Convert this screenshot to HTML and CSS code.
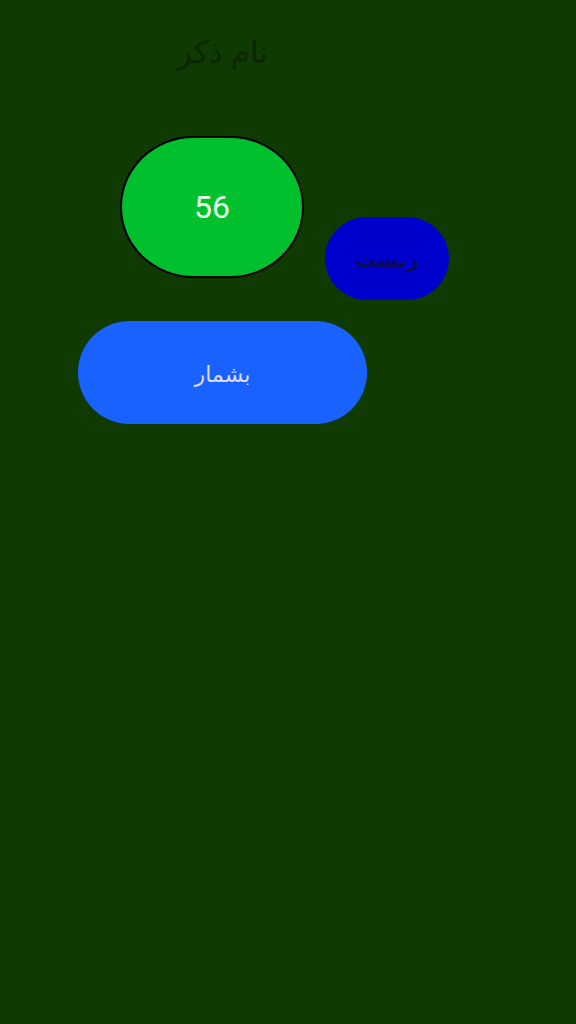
FILE: index.html
```html
<!DOCTYPE html>
<html lang="fa">
<head>
<meta charset="utf-8">
<link rel="stylesheet" href="styles.css">
</head>
<body>
<div class="page">
  <div class="title">نام ذکر</div>
  <div class="row">
    <div class="counter">56</div>
    <div class="reset">ریست</div>
  </div>
  <div class="count-btn">بشمار</div>
</div>
</body>
</html>
```
FILE: styles.css
```css
html, body {
  margin: 0;
  padding: 0;
  background: #0f3a02;
  height: 100%;
}
.page {
  width: 576px;
  height: 1024px;
  padding: 30px 0 0 78px;
  box-sizing: border-box;
  font-family: "Noto Sans", "DejaVu Sans", sans-serif;
}
.title {
  width: 289px;
  text-align: center;
  font-size: 31px;
  line-height: 42px;
  color: #0a2602;
  direction: rtl;
}
.row {
  display: flex;
  align-items: flex-start;
  margin-top: 64px;
  margin-left: 42px;
}
.counter {
  width: 180px;
  height: 138px;
  border: 2.5px solid #000;
  border-radius: 40% / 50%;
  background: #00c02d;
  color: #e8ffea;
  font-family: Roboto, "Noto Sans", sans-serif;
  font-size: 32px;
  display: flex;
  align-items: center;
  justify-content: center;
}
.reset {
  margin-left: 21px;
  margin-top: 81px;
  width: 124px;
  height: 83px;
  border-radius: 42px;
  background: #0000cc;
  color: #0a0a55;
  font-weight: bold;
  font-size: 21px;
  display: flex;
  align-items: center;
  justify-content: center;
  direction: rtl;
}
.count-btn {
  margin-top: 21px;
  width: 289px;
  height: 103px;
  border-radius: 52px;
  background: #1a62ff;
  color: #dcdcff;
  font-size: 22px;
  display: flex;
  align-items: center;
  justify-content: center;
  direction: rtl;
}
```
